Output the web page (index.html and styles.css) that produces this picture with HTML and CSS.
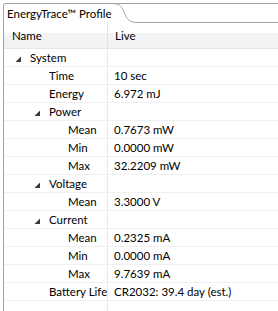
FILE: index.html
```html
<!DOCTYPE html>
<html lang="en">
<head>
  <meta charset="UTF-8" />
  <title>EnergyTrace Profile</title>
  <link rel="stylesheet" href="styles.css">
</head>
<body>
  <div class="view">
    <div class="tabbar">
      <div class="tab">EnergyTrace™ Profile</div>
      <svg class="tab-curve" width="26" height="20" viewBox="0 0 26 20">
        <path d="M0 0.5 H26" stroke="#a5a5a5" fill="none" />
        <path d="M0 0.5 C8 0.5 10 2 13 9 C16 16 18 19.5 26 19.5" stroke="#a5a5a5" fill="none" />
      </svg>
      <div class="tab-rest"></div>
    </div>

    <div class="tree">
      <div class="row head">
        <div class="cell name">Name</div>
        <div class="cell value">Live</div>
      </div>

      <div class="row">
        <div class="cell name lvl0"><span class="twisty"><svg width="7" height="7" viewBox="0 0 7 7"><polygon points="6,0.5 6,6 0.5,6" /></svg></span>System</div>
        <div class="cell value"></div>
      </div>
      <div class="row">
        <div class="cell name lvl1"><span class="twisty"></span>Time</div>
        <div class="cell value">10 sec</div>
      </div>
      <div class="row">
        <div class="cell name lvl1"><span class="twisty"></span>Energy</div>
        <div class="cell value">6.972 mJ</div>
      </div>
      <div class="row">
        <div class="cell name lvl1"><span class="twisty"><svg width="7" height="7" viewBox="0 0 7 7"><polygon points="6,0.5 6,6 0.5,6" /></svg></span>Power</div>
        <div class="cell value"></div>
      </div>
      <div class="row">
        <div class="cell name lvl2"><span class="twisty"></span>Mean</div>
        <div class="cell value">0.7673 mW</div>
      </div>
      <div class="row">
        <div class="cell name lvl2"><span class="twisty"></span>Min</div>
        <div class="cell value">0.0000 mW</div>
      </div>
      <div class="row">
        <div class="cell name lvl2"><span class="twisty"></span>Max</div>
        <div class="cell value">32.2209 mW</div>
      </div>
      <div class="row">
        <div class="cell name lvl1"><span class="twisty"><svg width="7" height="7" viewBox="0 0 7 7"><polygon points="6,0.5 6,6 0.5,6" /></svg></span>Voltage</div>
        <div class="cell value"></div>
      </div>
      <div class="row">
        <div class="cell name lvl2"><span class="twisty"></span>Mean</div>
        <div class="cell value">3.3000 V</div>
      </div>
      <div class="row">
        <div class="cell name lvl1"><span class="twisty"><svg width="7" height="7" viewBox="0 0 7 7"><polygon points="6,0.5 6,6 0.5,6" /></svg></span>Current</div>
        <div class="cell value"></div>
      </div>
      <div class="row">
        <div class="cell name lvl2"><span class="twisty"></span>Mean</div>
        <div class="cell value">0.2325 mA</div>
      </div>
      <div class="row">
        <div class="cell name lvl2"><span class="twisty"></span>Min</div>
        <div class="cell value">0.0000 mA</div>
      </div>
      <div class="row">
        <div class="cell name lvl2"><span class="twisty"></span>Max</div>
        <div class="cell value">9.7639 mA</div>
      </div>
      <div class="row">
        <div class="cell name lvl1"><span class="twisty"></span>Battery Life</div>
        <div class="cell value">CR2032: 39.4 day (est.)</div>
      </div>

      <div class="row filler">
        <div class="cell name"></div>
        <div class="cell value"></div>
      </div>
    </div>
  </div>
</body>
</html>
```

FILE: styles.css
```css
html, body {
  height: 100%;
}
body {
  margin: 0;
  background: #fff;
  font-family: "Segoe UI", Lato, "Noto Sans", sans-serif;
  font-size: 11.5px;
  color: #000;
  overflow: hidden;
}
.view {
  display: flex;
  flex-direction: column;
  height: 100%;
  box-sizing: border-box;
  padding: 3px 0 0 3px;
}
.tabbar {
  display: flex;
  height: 20px;
  flex-shrink: 0;
}
.tab {
  width: 108px;
  box-sizing: border-box;
  border-top: 1px solid #a5a5a5;
  border-left: 1px solid #a5a5a5;
  border-top-left-radius: 3px;
  padding: 1px 0 0 3px;
  line-height: 17px;
  white-space: nowrap;
}
.tab-curve {
  display: block;
  flex-shrink: 0;
}
.tab-rest {
  flex: 1;
  box-sizing: border-box;
  border-top: 1px solid #a5a5a5;
  border-bottom: 1px solid #a5a5a5;
}
.tree {
  flex: 1;
  display: flex;
  flex-direction: column;
  border-left: 1px solid #a5a5a5;
}
.row {
  display: grid;
  grid-template-columns: 104px 1fr;
  height: 18px;
  box-sizing: border-box;
  border-bottom: 1px solid #f0f0f0;
}
.row.head {
  height: 26px;
  border-bottom: 1px solid #e5e5e5;
  background: linear-gradient(to bottom, #fff 0, #fff 40%, #f3f4f6 40%, #f0f1f3 100%);
}
.row.filler {
  flex: 1;
  border-bottom: none;
}
.cell {
  display: flex;
  align-items: center;
  white-space: nowrap;
  overflow: hidden;
}
.cell.name {
  border-right: 1px solid #e8e8e8;
}
.head .cell.name {
  padding-left: 8px;
  border-right-color: #e2e3e5;
}
.cell.value {
  padding-left: 6px;
}
.head .cell.value {
  padding-left: 7px;
}
.lvl0 {
  padding-left: 8px;
}
.lvl1 {
  padding-left: 27px;
}
.lvl2 {
  padding-left: 46px;
}
.twisty {
  display: inline-flex;
  width: 18px;
  height: 100%;
  align-items: center;
  flex-shrink: 0;
}
.twisty svg {
  margin: 3px 0 0 3px;
  fill: #3a3a3a;
}
```
